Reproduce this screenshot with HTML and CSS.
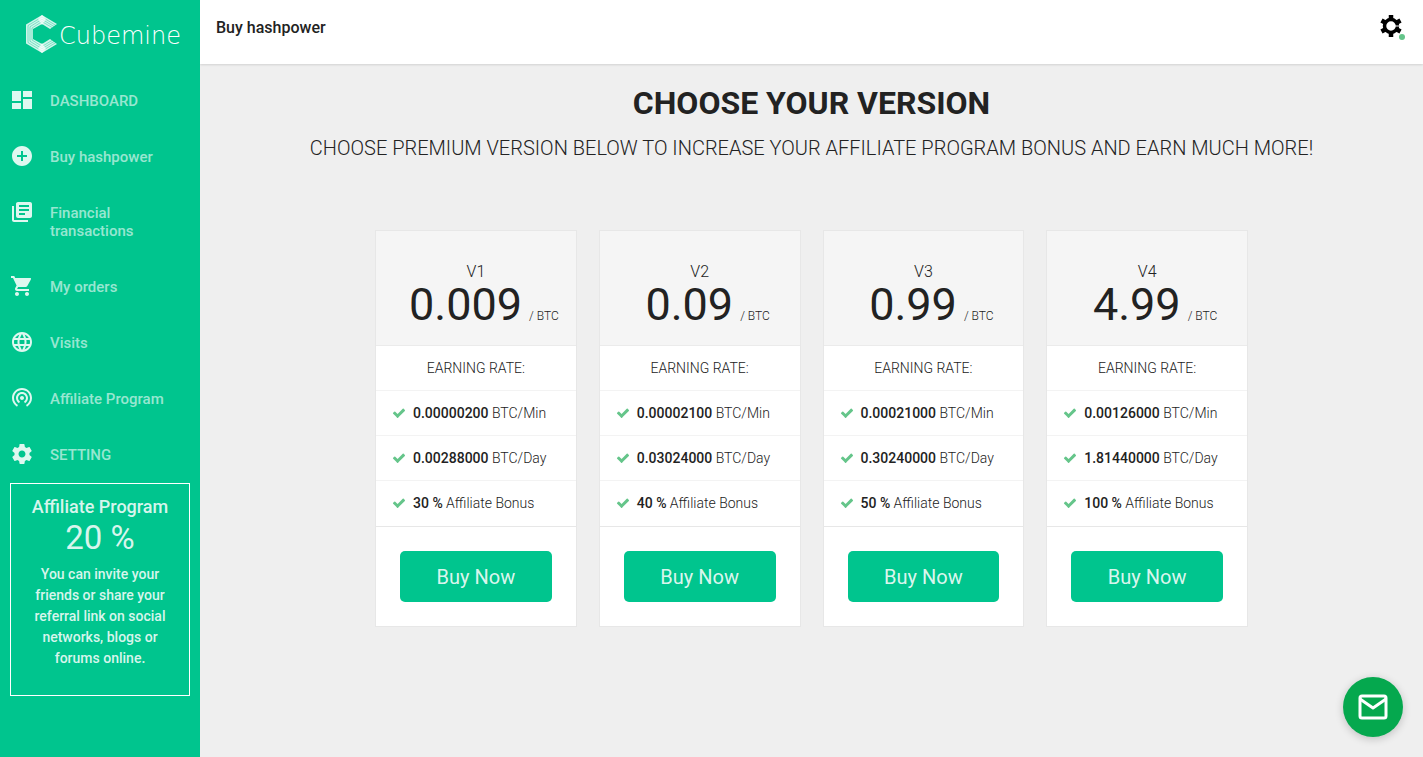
FILE: index.html
```html
<!DOCTYPE html>
<html lang="en">
<head>
  <meta charset="UTF-8" />
  <title>Cubemine - Buy hashpower</title>
  <meta name="viewport" content="width=device-width, initial-scale=1.0" />
  <link rel="stylesheet" href="styles.css">
</head>
<body>
  <svg class="sprite" aria-hidden="true">
    <symbol id="icon-check" viewBox="0 0 1792 1792">
      <path d="M1671 566q0 40-28 68l-724 724-136 136q-28 28-68 28t-68-28l-136-136-362-362q-28-28-28-68t28-68l136-136q28-28 68-28t68 28l294 295 656-657q28-28 68-28t68 28l136 136q28 28 28 68z"/>
    </symbol>
  </svg>

  <div class="layout">
    <aside class="sidebar">
      <a href="#" class="logo">
        <svg width="34" height="40" viewBox="0 0 34 40">
          <path fill="#fff" fill-opacity="0.82" d="M17 1 32 10 25 15l-8-5-9 5v10l9 5 8-5 7 5L17 39 1 29.500v-19z"/>
          <path fill="none" stroke="#00c58e" stroke-opacity="0.600" stroke-width="0.700" d="M31 11.500 17 3 3 11.500v17L17 37l14-8.500M29 12.500 17 5.300 5 12.700v14.600l12 7.400 12-7.200M27 13.500 17 7.600 7 14v12l10 6.400 10-5.900"/>
          <path fill="#fff" fill-opacity="0.700" d="M17 1l4 4-4 6-4-6zM17 39l4-4-4-6-4 6z"/>
        </svg>
        <span>Cubemine</span>
      </a>

      <nav class="menu">
        <a href="#">
          <svg viewBox="0 0 24 24"><path d="M2 13h9V3H2v10zm0 8h9v-6H2v6zm11 0h9V11h-9v10zm0-18v6h9V3h-9z"/></svg>
          <span>DASHBOARD</span>
        </a>
        <a href="#">
          <svg viewBox="0 0 24 24"><path d="M12 2C6.480 2 2 6.480 2 12s4.480 10 10 10 10-4.480 10-10S17.520 2 12 2zm5 11h-4v4h-2v-4H7v-2h4V7h2v4h4v2z"/></svg>
          <span>Buy hashpower</span>
        </a>
        <a href="#">
          <svg viewBox="0 0 24 24"><path d="M4 6H2v14c0 1.100.9 2 2 2h14v-2H4V6zm16-4H8c-1.100 0-2 .9-2 2v12c0 1.100.9 2 2 2h12c1.100 0 2-.9 2-2V4c0-1.100-.9-2-2-2zm-1 9H9V9h10v2zm-4 4H9v-2h6v2zm4-8H9V5h10v2z"/></svg>
          <span>Financial transactions</span>
        </a>
        <a href="#">
          <svg viewBox="0 0 24 24"><path d="M7 18c-1.100 0-1.990.9-1.990 2S5.900 22 7 22s2-.9 2-2-.9-2-2-2zM1 2v2h2l3.600 7.590-1.350 2.450c-.16.280-.25.610-.25.960 0 1.100.9 2 2 2h12v-2H7.420c-.14 0-.25-.11-.25-.25l.03-.12.900-1.630h7.450c.75 0 1.410-.41 1.750-1.030l3.580-6.490A1 1 0 0 0 20 4H5.210l-.94-2H1zm16 16c-1.100 0-1.990.9-1.990 2s.89 2 1.990 2 2-.9 2-2-.9-2-2-2z"/></svg>
          <span>My orders</span>
        </a>
        <a href="#">
          <svg viewBox="0 0 24 24"><path d="M11.990 2C6.470 2 2 6.480 2 12s4.470 10 9.990 10C17.520 22 22 17.520 22 12S17.520 2 11.990 2zm6.930 6h-2.950a15.650 15.650 0 0 0-1.380-3.560A8.030 8.030 0 0 1 18.920 8zM12 4.040c.83 1.200 1.480 2.530 1.910 3.960h-3.820c.43-1.430 1.080-2.760 1.910-3.960zM4.260 14C4.100 13.360 4 12.690 4 12s.1-1.360.26-2h3.380c-.08.660-.14 1.320-.14 2s.06 1.340.14 2H4.260zm.82 2h2.950c.32 1.250.78 2.450 1.380 3.560A7.990 7.990 0 0 1 5.080 16zm2.950-8H5.080a7.990 7.990 0 0 1 4.330-3.560A15.650 15.650 0 0 0 8.030 8zM12 19.960c-.83-1.200-1.480-2.530-1.910-3.960h3.820c-.43 1.430-1.080 2.760-1.910 3.960zM14.340 14H9.660c-.09-.66-.16-1.320-.16-2s.07-1.350.16-2h4.680c.09.650.16 1.320.16 2s-.07 1.340-.16 2zm.25 5.560c.6-1.110 1.060-2.310 1.380-3.560h2.950a8.030 8.030 0 0 1-4.330 3.560zM16.360 14c.08-.66.14-1.320.14-2s-.06-1.340-.14-2h3.380c.16.640.26 1.310.26 2s-.1 1.360-.26 2h-3.380z"/></svg>
          <span>Visits</span>
        </a>
        <a href="#">
          <svg viewBox="0 0 24 24"><path d="M12 10c-1.100 0-2 .9-2 2s.9 2 2 2 2-.9 2-2-.9-2-2-2zm6 2c0-3.310-2.690-6-6-6s-6 2.690-6 6c0 2.220 1.210 4.150 3 5.190l1-1.740c-1.190-.7-2-1.970-2-3.450 0-2.210 1.790-4 4-4s4 1.790 4 4c0 1.480-.81 2.750-2 3.450l1 1.740c1.790-1.040 3-2.970 3-5.190zM12 2C6.480 2 2 6.480 2 12c0 3.700 2.010 6.920 4.990 8.650l1-1.730C5.610 17.530 4 14.960 4 12c0-4.420 3.580-8 8-8s8 3.580 8 8c0 2.960-1.610 5.530-4 6.920l1 1.730c2.990-1.730 5-4.950 5-8.650 0-5.520-4.480-10-10-10z"/></svg>
          <span>Affiliate Program</span>
        </a>
        <a href="#">
          <svg viewBox="0 0 24 24"><path d="M19.430 12.980c.04-.32.070-.64.070-.98s-.03-.66-.07-.98l2.110-1.650c.19-.15.240-.42.120-.64l-2-3.460c-.12-.22-.39-.3-.61-.22l-2.490 1c-.52-.4-1.080-.73-1.690-.98l-.38-2.650A.488.488 0 0 0 14 2h-4c-.25 0-.46.180-.49.420l-.38 2.650c-.61.250-1.170.59-1.690.98l-2.490-1c-.23-.09-.49 0-.61.220l-2 3.460c-.13.220-.07.490.12.640l2.110 1.650c-.04.320-.07.650-.07.980s.03.660.070.980l-2.110 1.650c-.19.150-.24.420-.12.640l2 3.460c.12.220.39.300.61.220l2.490-1c.52.400 1.080.730 1.690.98l.38 2.650c.03.240.24.420.49.420h4c.25 0 .46-.18.49-.42l.38-2.650c.61-.25 1.170-.59 1.690-.98l2.490 1c.23.090.49 0 .61-.22l2-3.460c.12-.22.070-.49-.12-.64l-2.110-1.650zM12 15.500c-1.930 0-3.500-1.570-3.500-3.500s1.570-3.500 3.500-3.500 3.500 1.570 3.500 3.500-1.570 3.500-3.500 3.500z"/></svg>
          <span>SETTING</span>
        </a>
      </nav>

      <div class="affiliate-box">
        <h4>Affiliate Program</h4>
        <div class="percent">20 %</div>
        <p>You can invite your friends or share your referral link on social networks, blogs or forums online.</p>
      </div>
    </aside>

    <div class="page">
      <header class="topbar">
        <h1>Buy hashpower</h1>
        <button type="button" class="user-menu" aria-label="Account settings">
          <svg width="22" height="22" viewBox="0 0 22 22">
            <g stroke="#000" stroke-width="4.500">
              <path d="M11 0v5M11 17v5M1.500 5.500 6 8M16 14l4.500 2.500M1.500 16.500 6 14M16 8l4.500-2.500"/>
            </g>
            <circle cx="11" cy="11" r="6.500" fill="none" stroke="#000" stroke-width="3.500"/>
            <path d="M14 11h6" stroke="#fff" stroke-width="1"/>
          </svg>
          <span class="status"></span>
        </button>
      </header>

      <main class="content">
        <h2>CHOOSE YOUR VERSION</h2>
        <p class="lead">CHOOSE PREMIUM VERSION BELOW TO INCREASE YOUR AFFILIATE PROGRAM BONUS AND EARN MUCH MORE!</p>

        <div class="plans">
          <section class="plan">
            <div class="plan-head">
              <h3>V1</h3>
              <div class="price">0.009 <small>/ BTC</small></div>
            </div>
            <ul>
              <li class="rate">EARNING RATE:</li>
              <li><svg><use href="#icon-check"/></svg><span><b>0.00000200</b> BTC/Min</span></li>
              <li><svg><use href="#icon-check"/></svg><span><b>0.00288000</b> BTC/Day</span></li>
              <li><svg><use href="#icon-check"/></svg><span><b>30 %</b> Affiliate Bonus</span></li>
            </ul>
            <div class="plan-foot"><button type="button" class="buy">Buy Now</button></div>
          </section>

          <section class="plan">
            <div class="plan-head">
              <h3>V2</h3>
              <div class="price">0.09 <small>/ BTC</small></div>
            </div>
            <ul>
              <li class="rate">EARNING RATE:</li>
              <li><svg><use href="#icon-check"/></svg><span><b>0.00002100</b> BTC/Min</span></li>
              <li><svg><use href="#icon-check"/></svg><span><b>0.03024000</b> BTC/Day</span></li>
              <li><svg><use href="#icon-check"/></svg><span><b>40 %</b> Affiliate Bonus</span></li>
            </ul>
            <div class="plan-foot"><button type="button" class="buy">Buy Now</button></div>
          </section>

          <section class="plan">
            <div class="plan-head">
              <h3>V3</h3>
              <div class="price">0.99 <small>/ BTC</small></div>
            </div>
            <ul>
              <li class="rate">EARNING RATE:</li>
              <li><svg><use href="#icon-check"/></svg><span><b>0.00021000</b> BTC/Min</span></li>
              <li><svg><use href="#icon-check"/></svg><span><b>0.30240000</b> BTC/Day</span></li>
              <li><svg><use href="#icon-check"/></svg><span><b>50 %</b> Affiliate Bonus</span></li>
            </ul>
            <div class="plan-foot"><button type="button" class="buy">Buy Now</button></div>
          </section>

          <section class="plan">
            <div class="plan-head">
              <h3>V4</h3>
              <div class="price">4.99 <small>/ BTC</small></div>
            </div>
            <ul>
              <li class="rate">EARNING RATE:</li>
              <li><svg><use href="#icon-check"/></svg><span><b>0.00126000</b> BTC/Min</span></li>
              <li><svg><use href="#icon-check"/></svg><span><b>1.81440000</b> BTC/Day</span></li>
              <li><svg><use href="#icon-check"/></svg><span><b>100 %</b> Affiliate Bonus</span></li>
            </ul>
            <div class="plan-foot"><button type="button" class="buy">Buy Now</button></div>
          </section>
        </div>
      </main>
    </div>
  </div>

  <button type="button" class="mail-button" aria-label="Contact us">
    <svg width="30" height="26" viewBox="0 0 30 26" fill="none" stroke="#fff" stroke-width="3" stroke-linejoin="round">
      <rect x="2" y="2" width="26" height="22" rx="2"/>
      <path d="M2 5l13 9 13-9"/>
    </svg>
  </button>
</body>
</html>
```
FILE: styles.css
```css
* {
  box-sizing: border-box;
}
body {
  margin: 0;
  font-family: Roboto, sans-serif;
  font-size: 14px;
  color: #222;
  background-color: #efefef;
}
h1, h2, h3, h4, p, ul {
  margin: 0;
  padding: 0;
}
button {
  font-family: inherit;
  border: none;
  padding: 0;
  cursor: pointer;
}
.sprite {
  display: none;
}
.layout {
  display: flex;
  min-height: 100vh;
}

/* sidebar */
.sidebar {
  flex: 0 0 200px;
  position: relative;
  background-color: #00c58e;
  color: rgba(255, 255, 255, 0.85);
}
.logo {
  display: flex;
  align-items: center;
  height: 72px;
  padding: 0 0 4px 25px;
  color: #fff;
  font-family: "DejaVu Sans", "DejaVu Sans Light", sans-serif;
  font-size: 24px;
  font-weight: 200;
  text-decoration: none;
}
.logo span {
  padding-top: 4px;
}
.menu a {
  display: flex;
  gap: 16px;
  padding: 16px 10px 20px;
  color: rgba(255, 255, 255, 0.6);
  font-size: 15px;
  font-weight: 500;
  line-height: 18px;
  text-decoration: none;
}
.menu svg {
  flex: none;
  width: 24px;
  height: 24px;
  margin-bottom: -4px;
  fill: rgba(255, 255, 255, 0.87);
}
.menu span {
  padding-top: 4px;
  margin-bottom: -2px;
}
.affiliate-box {
  margin: 1px 10px 0;
  padding: 12px 20px 26px;
  border: 1px solid #fff;
  text-align: center;
}
.affiliate-box h4 {
  font-size: 18px;
  font-weight: 500;
  line-height: 22px;
  white-space: nowrap;
}
.percent {
  font-size: 33px;
  line-height: 40px;
}
.affiliate-box p {
  padding-top: 6px;
  font-weight: 500;
  line-height: 21px;
}

/* top bar */
.page {
  flex: 1;
  min-width: 0;
}
.topbar {
  display: flex;
  align-items: flex-start;
  justify-content: space-between;
  height: 64px;
  padding: 15px 21px 0 16px;
  background-color: #fff;
  box-shadow: 0 1px 2px rgba(0, 0, 0, 0.12);
}
.topbar h1 {
  font-size: 16px;
  font-weight: 500;
  line-height: 26px;
}
.user-menu {
  position: relative;
  width: 22px;
  height: 22px;
  background: none;
}
.user-menu svg {
  display: block;
}
.status {
  position: absolute;
  right: -3px;
  bottom: -3px;
  width: 6px;
  height: 6px;
  border-radius: 50%;
  background-color: #65c58a;
}

/* plans */
.content {
  padding: 20px 24px;
  text-align: center;
}
.content h2 {
  font-size: 32px;
  font-weight: 700;
  line-height: 38px;
}
.lead {
  padding-top: 12px;
  font-size: 20px;
  font-weight: 300;
  line-height: 28px;
}
.plans {
  display: grid;
  grid-template-columns: repeat(4, 1fr);
  gap: 22px;
  max-width: 873px;
  margin: 68px auto 0;
}
.plan {
  background-color: #fff;
  border: 1px solid #e7e7e7;
}
.plan-head {
  padding: 31px 0 17px;
  background-color: #f5f5f5;
  border-bottom: 1px solid #ebebeb;
}
.plan h3 {
  font-size: 16px;
  font-weight: 300;
  line-height: 20px;
}
.price {
  display: flex;
  align-items: baseline;
  justify-content: center;
  gap: 7px;
  padding-left: 16px;
  font-size: 45px;
  line-height: 46px;
  white-space: nowrap;
}
.price small {
  font-size: 12px;
  font-weight: 300;
  line-height: 14px;
}
.plan ul {
  list-style: none;
}
.plan li {
  display: flex;
  align-items: center;
  gap: 7px;
  height: 45px;
  padding-left: 16px;
  border-bottom: 1px solid #f3f3f3;
  font-weight: 300;
  white-space: nowrap;
}
.plan .rate {
  justify-content: center;
  padding-left: 0;
}
.plan li:last-child {
  height: 46px;
  padding-bottom: 1px;
  border-bottom-color: #e7e7e7;
}
.plan li svg {
  width: 14px;
  height: 14px;
  fill: #65c58a;
}
.plan b {
  font-weight: 500;
}
.plan-foot {
  padding: 24px;
}
.buy {
  display: block;
  width: 100%;
  height: 51px;
  border-radius: 5px;
  background-color: #00c58e;
  color: rgba(255, 255, 255, 0.87);
  font-size: 20px;
}
.buy:hover {
  background-color: #00b07f;
}

.mail-button {
  position: fixed;
  right: 20px;
  bottom: 20px;
  display: flex;
  align-items: center;
  justify-content: center;
  width: 60px;
  height: 60px;
  border-radius: 50%;
  background-color: #05a84e;
  box-shadow: 0 2px 8px rgba(0, 0, 0, 0.2);
}
```
